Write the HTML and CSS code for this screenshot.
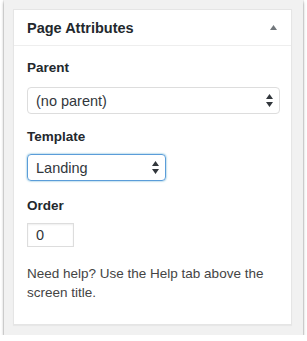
FILE: index.html
```html
<!DOCTYPE html>
<html lang="en">
<head>
  <meta charset="UTF-8">
  <title>Page Attributes</title>
  <link rel="stylesheet" href="styles.css">
</head>
<body>

<div class="screen">
  <div class="postbox">
    <div class="hndle">
      <h2>Page Attributes</h2>
      <svg class="toggle" width="7" height="5" viewBox="0 0 7 5"><path d="M3.5 0 L7 5 L0 5 Z" fill="#72777c"/></svg>
    </div>

    <div class="inside">
      <p class="label">Parent</p>
      <div class="select wide">
        <span>(no parent)</span>
        <svg width="7" height="13" viewBox="0 0 7 13"><path d="M3.5 0 L7 5 L0 5 Z M0 8 L7 8 L3.5 13 Z" fill="#32373c"/></svg>
      </div>

      <p class="label">Template</p>
      <div class="select focus">
        <span>Landing</span>
        <svg width="7" height="13" viewBox="0 0 7 13"><path d="M3.5 0 L7 5 L0 5 Z M0 8 L7 8 L3.5 13 Z" fill="#32373c"/></svg>
      </div>

      <p class="label">Order</p>
      <div class="order">0</div>

      <p class="help">Need help? Use the Help tab above the screen title.</p>
    </div>
  </div>
</div>

</body>
</html>
```

FILE: styles.css
```css
body {
  margin: 0;
  background: #fff;
  font-family: "Liberation Sans", Arial, sans-serif;
  font-size: 13.5px;
  color: #444;
}

.screen {
  width: 299px;
  height: 335px;
  margin-left: 4px;
  padding-top: 9px;
  box-sizing: border-box;
  background: #f1f1f1;
  box-shadow: 0 2px 3px rgba(0,0,0,0.4), 0 0 1px rgba(0,0,0,0.35);
}

.postbox {
  width: 279px;
  height: 316px;
  margin-left: 9px;
  box-sizing: border-box;
  background: #fff;
  border: 1px solid #e5e5e5;
  box-shadow: 0 1px 1px rgba(0,0,0,0.04);
}

.hndle {
  display: flex;
  align-items: center;
  justify-content: space-between;
  height: 35px;
  padding: 0 14px 0 13px;
  border-bottom: 1px solid #eee;
}
.hndle h2 {
  margin: 0;
  font-size: 14.5px;
  font-weight: bold;
  color: #23282d;
}
.toggle { margin-top: -1px; }

.inside {
  padding: 12px 13px 0 13px;
}

.label {
  margin: 0 0 10px;
  line-height: 19px;
  font-weight: bold;
  color: #23282d;
}

.select {
  display: flex;
  align-items: center;
  justify-content: space-between;
  height: 27px;
  padding: 0 6px 0 8px;
  box-sizing: border-box;
  border: 1px solid #ddd;
  border-radius: 4px;
  color: #32373c;
  font-size: 14.5px;
  margin-bottom: 13px;
}
.select.wide { width: 253px; }
.select.focus {
  width: 139px;
  border-color: #5b9dd9;
  box-shadow: 0 0 2px rgba(30,140,190,0.8);
  margin-bottom: 15px;
}
.select + .label + .select { margin-top: -2px; }

.order {
  width: 47px;
  height: 24px;
  box-sizing: border-box;
  padding: 0 8px;
  line-height: 22px;
  border: 1px solid #ddd;
  box-shadow: inset 0 1px 2px rgba(0,0,0,0.07);
  color: #32373c;
  font-size: 14.5px;
  margin-top: -2px;
}

.help {
  margin: 17px 0 0;
  line-height: 19px;
}
```
